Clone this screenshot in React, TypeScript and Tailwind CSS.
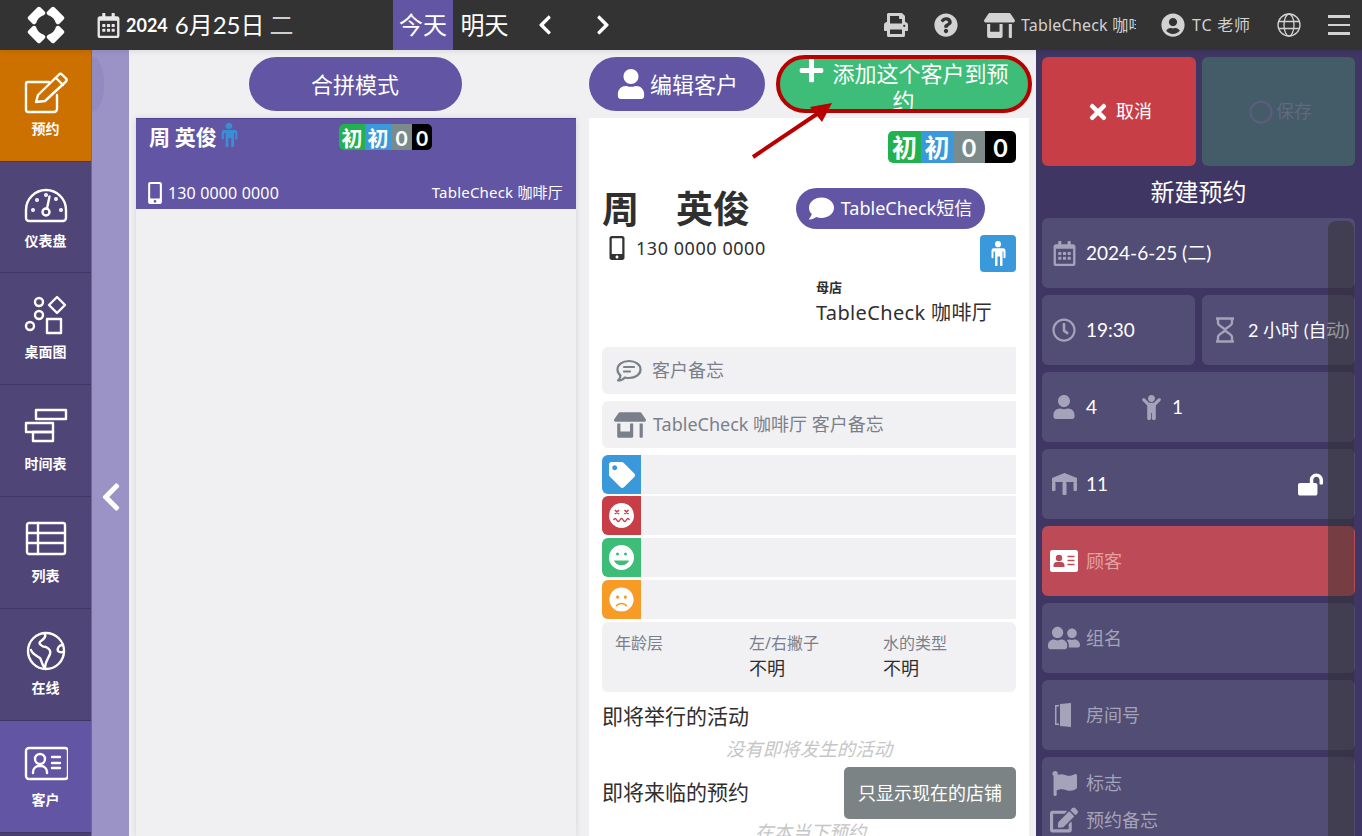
import React from "react";
import {
  FaRegCalendarAlt, FaPrint, FaQuestionCircle, FaStoreAlt, FaUserCircle, FaTimes, FaRegCircle, FaRegClock,
  FaUser, FaChild, FaUserFriends, FaFlag, FaEdit, FaLockOpen, FaTag, FaFrown,
  FaMobileAlt, FaComment, FaPlus, FaChevronLeft, FaChevronRight,
} from "react-icons/fa";

const plex = "font-['Noto_Sans','Noto_Sans_CJK_SC',sans-serif]";
const lato = "font-['Lato','Noto_Sans_CJK_SC',sans-serif]";

const Stroke = ({ children, size = 44 }: { children: React.ReactNode; size?: number }) => (
  <svg width={size} height={size} viewBox="0 0 44 44" fill="none" stroke="white" strokeWidth="2.400" strokeLinecap="round" strokeLinejoin="round">
    {children}
  </svg>
);

const nav = [
  {
    label: "预约", h: "h-[112px]", bg: "bg-[#cc7000]",
    icon: (
      <Stroke>
        <path d="M33 23v14a3 3 0 0 1-3 3H4a2 2 0 0 1-2-2V12a2 2 0 0 1 2-2h21" />
        <path d="M12 30l2-7L35 2.500a2 2 0 0 1 3 0l4 4a2 2 0 0 1 0 3L21 29z" />
        <path d="M32 6l7 7" />
      </Stroke>
    ),
  },
  {
    label: "仪表盘", h: "h-[111px]", bg: "bg-[#4f4577]",
    icon: (
      <Stroke>
        <path d="M5 37a3 3 0 0 1-3-3v-8a20 20 0 0 1 40 0v8a3 3 0 0 1-3 3z" />
        <circle cx="22" cy="28" r="3.500" />
        <path d="M23 24.500l2.500-12" />
        <circle cx="9" cy="26" r=".8" /><circle cx="13" cy="16" r=".8" /><circle cx="22" cy="11" r=".8" /><circle cx="32" cy="15" r=".8" /><circle cx="37" cy="26" r=".8" />
      </Stroke>
    ),
  },
  {
    label: "桌面图", h: "h-[112px]", bg: "bg-[#4f4577]",
    icon: (
      <Stroke>
        <circle cx="15" cy="7" r="4" /><circle cx="15" cy="20" r="4" /><circle cx="6" cy="31" r="4" />
        <path d="M33 2l8 8-8 8-8-8z" />
        <rect x="23" y="24" width="14" height="14" />
      </Stroke>
    ),
  },
  {
    label: "时间表", h: "h-[112px]", bg: "bg-[#4f4577]",
    icon: (
      <Stroke>
        <rect x="12" y="3" width="30" height="9" />
        <rect x="2" y="16" width="27" height="9" />
        <rect x="9" y="25" width="20" height="9" />
      </Stroke>
    ),
  },
  {
    label: "列表", h: "h-[112px]", bg: "bg-[#4f4577]",
    icon: (
      <Stroke>
        <rect x="3" y="4" width="38" height="31" rx="2" />
        <path d="M3 14h38M3 24h38M14 4v31" />
      </Stroke>
    ),
  },
  {
    label: "在线", h: "h-[112px]", bg: "bg-[#4f4577]",
    icon: (
      <Stroke>
        <circle cx="22" cy="20" r="18" />
        <path d="M20 2c3 3 0 6-3 8-4 2 1 6 5 6 4 2 5 4 4 7-2 5-5 8-5 14-3-2-3-7-5-10-3-2-8-4-9-8" />
        <path d="M39 14c-4 0-6 3-5 6 2 2 4 1 6 1" />
      </Stroke>
    ),
  },
  {
    label: "客户", h: "h-[112px]", bg: "bg-[#6155a4]",
    icon: (
      <Stroke>
        <rect x="2" y="5" width="42" height="31" rx="3" />
        <circle cx="16" cy="16" r="5" />
        <path d="M9 30v-1a6 6 0 0 1 6-6h2a6 6 0 0 1 6 6v1" />
        <path d="M28 14h8M28 20h8M28 25h8" />
      </Stroke>
    ),
  },
];

const Logo = () => (
  <svg width="38" height="38" viewBox="0 0 38 38">
    <g fill="white">
      <rect x="1" y="4.500" width="17" height="10" rx="2" transform="rotate(-45 9.500 9.500)" />
      <rect x="20" y="4.500" width="17" height="10" rx="2" transform="rotate(45 28.500 9.500)" />
      <rect x="1" y="23.500" width="17" height="10" rx="2" transform="rotate(45 9.500 28.500)" />
      <rect x="20" y="23.500" width="17" height="10" rx="2" transform="rotate(-45 28.500 28.500)" />
    </g>
    <circle cx="19" cy="19" r="10" fill="#333333" />
  </svg>
);

const MaleIcon = ({ w = 16, h = 24, color = "currentColor" }: { w?: number; h?: number; color?: string }) => (
  <svg width={w} height={h} viewBox="0 0 16 24" fill={color} preserveAspectRatio="none">
    <circle cx="8" cy="3" r="3" />
    <path d="M3 7h10a2.500 2.500 0 0 1 2.500 2.500v6a1 1 0 0 1-2 0V10h-1v13a1 1 0 0 1-2.500 0v-8H8.500h-1v8a1 1 0 0 1-2.500 0V10H3.500v5.500a1 1 0 0 1-2 0v-6A2.500 2.500 0 0 1 3 7z" />
  </svg>
);

const TableIcon = () => (
  <svg width="25" height="22" viewBox="0 0 25 22" fill="#a5a3b9">
    <path d="M12.500 0L25 5v4H0V5z" />
    <rect x="0" y="9" width="3.500" height="9" rx="1" />
    <rect x="10.500" y="9" width="4" height="13" rx="1" />
    <rect x="21.500" y="9" width="3.500" height="9" rx="1" />
  </svg>
);

const Hourglass = () => (
  <svg width="20" height="26" viewBox="0 0 20 26" fill="none" stroke="#a5a3b9" strokeWidth="2.400">
    <path d="M1 1.500h18M1 24.500h18M3 2v4c0 3 7 5 7 7s-7 4-7 7v4M17 2v4c0 3-7 5-7 7s7 4 7 7v4" />
  </svg>
);

const Door = () => (
  <svg width="18" height="24" viewBox="0 0 18 24" fill="#a5a3b9">
    <path d="M5 1l11-1v24l-11-1z" /><path d="M0 2h4v1.500H1.500v17H4V22H0z" />
  </svg>
);

const NoteLines = () => (
  <svg width="26" height="24" viewBox="0 0 26 24" fill="none" stroke="#7b7f89" strokeWidth="2.200" strokeLinecap="round" strokeLinejoin="round">
    <path d="M13 2c6.500 0 11.500 3.500 11.500 8.500S19.500 19 13 19c-1.500 0-3-.2-4-.6C7.500 20 5 21.500 2 21.500c1.500-1.500 2.500-3.500 2.500-5C2.500 15 1.500 13 1.500 10.500 1.500 5.500 6.500 2 13 2z" />
    <path d="M8 8h10M8 12.500h6" />
  </svg>
);

const IdCard = () => (
  <svg width="28" height="22" viewBox="0 0 28 22">
    <rect width="28" height="22" rx="2.500" fill="white" />
    <circle cx="9" cy="8" r="3.200" fill="#bc4b57" />
    <path d="M3.500 17v-1.500A3.500 3.500 0 0 1 7 12h4a3.500 3.500 0 0 1 3.500 3.500V17z" fill="#bc4b57" />
    <path d="M17.500 6.500h7M17.500 10.500h7M17.500 14.500h7" stroke="#bc4b57" strokeWidth="1.600" />
  </svg>
);

const DizzyFace = () => (
  <svg width="25" height="25" viewBox="0 0 25 25">
    <circle cx="12.500" cy="12.500" r="12.500" fill="white" />
    <path d="M6 7l4 4M10 7l-4 4M15.500 7l4 4M19.500 7l-4 4" stroke="#c73e46" strokeWidth="1.600" />
    <path d="M4.500 17c1.500-2 2-2 3.200 0s2 2 3.200 0 2-2 3.200 0 2 2 3.200 0 2-2 3.200 0" fill="none" stroke="#c73e46" strokeWidth="1.400" />
  </svg>
);

const SmileFace = () => (
  <svg width="25" height="25" viewBox="0 0 25 25">
    <circle cx="12.500" cy="12.500" r="12.500" fill="white" />
    <circle cx="8.500" cy="9" r="1.500" fill="#3dbd78" /><circle cx="16.500" cy="9" r="1.500" fill="#3dbd78" />
    <path d="M5 15.500h15c-1 3-4 4.800-7.500 4.800S6 18.500 5 15.500z" fill="#3dbd78" />
  </svg>
);

const Badges = ({ big }: { big?: boolean }) => {
  const items: [string, string, string][] = big
    ? [["初", "bg-[#22b14f]", "w-[33px]"], ["初", "bg-[#3a99da]", "w-[32px]"], ["0", "bg-[#7b8a8b]", "w-[32px]"], ["0", "bg-black", "w-[31px]"]]
    : [["初", "bg-[#22b14f]", "w-[26px]"], ["初", "bg-[#3a99da]", "w-[26px]"], ["0", "bg-[#7b8a8b]", "w-[21px]"], ["0", "bg-black", "w-[20px]"]];
  return (
    <div className={`flex rounded-[5px] overflow-hidden ${big ? "h-[32px] text-[25px]" : "h-[26px] text-[21px]"}`}>
      {items.map(([t, c, w], i) => (
        <div key={i} className={`${w} ${c} flex items-center justify-center font-bold text-white leading-none ${lato}`}>{t}</div>
      ))}
    </div>
  );
};

const PurplePill = ({ children, className }: { children: React.ReactNode; className: string }) => (
  <div className={`bg-[#6155a4] text-white rounded-[27px] flex items-center justify-center ${className}`}>{children}</div>
);

const TagRow = ({ bg, icon }: { bg: string; icon: React.ReactNode }) => (
  <div className="h-[39px] bg-[#f1f1f4] rounded-l-[6px] flex">
    <div className={`w-[39px] ${bg} rounded-l-[6px] flex items-center justify-center text-white`}>{icon}</div>
  </div>
);

const Field = ({ children, className = "" }: { children: React.ReactNode; className?: string }) => (
  <div className={`h-[70px] bg-[#524d74] rounded-[6px] flex items-center ${className}`}>{children}</div>
);

const IconBox = ({ children }: { children: React.ReactNode }) => (
  <div className="w-[44px] flex items-center justify-center shrink-0 text-[#a5a3b9]">{children}</div>
);

export default function App() {
  return (
    <div className={`w-[1362px] h-[836px] overflow-hidden flex flex-col bg-[#f0f0f3] relative ${plex}`}>
      {/* top bar */}
      <header className="h-[50px] shrink-0 bg-[#333333] flex items-stretch text-white relative z-10 shadow-[0_2px_5px_rgba(0,0,0,0.08)]">
        <div className="w-[91px] flex items-center justify-center"><Logo /></div>
        <div className={`w-[302px] pl-[5px] flex items-center ${lato}`}>
          <FaRegCalendarAlt className="text-[25px] text-[#e8e8e8]" />
          <span className="ml-[5px] text-[18px] font-bold">2024</span>
          <span className="ml-[7px] text-[24px]">6月25日</span>
          <span className="ml-[5px] text-[24px] text-[#cfcfcf]">二</span>
        </div>
        <div className="w-[60px] bg-[#6155a4] flex items-center justify-center text-[24px]">今天</div>
        <div className="w-[63px] flex items-center justify-center text-[24px]">明天</div>
        <div className="w-[50px] flex items-center justify-center pl-[8px]"><FaChevronLeft className="text-[22px]" /></div>
        <div className="w-[60px] flex items-center justify-center pl-[14px]"><FaChevronRight className="text-[22px]" /></div>
        <div className="flex-1 flex items-center text-[#d2d2d2] text-[16px] pl-[258px]">
          <FaPrint className="text-[24px] shrink-0" />
          <FaQuestionCircle className="text-[24px] ml-[26px] shrink-0" />
          <FaStoreAlt className="text-[31px] ml-[26px] shrink-0" />
          <span className="ml-[6px] w-[115px] overflow-hidden whitespace-nowrap tracking-[0.2px]">TableCheck 咖啡厅</span>
          <FaUserCircle className="text-[24px] ml-[25px] shrink-0" />
          <span className="ml-[7px] w-[60px] whitespace-nowrap tracking-[0.8px]">TC 老师</span>
          <svg className="ml-[25px] shrink-0" width="24" height="24" viewBox="0 0 24 24" fill="none" stroke="#d2d2d2" strokeWidth="1.300">
            <circle cx="12" cy="12" r="11" /><ellipse cx="12" cy="12" rx="5" ry="11" /><path d="M1.500 8.500h21M1.500 15.500h21" />
          </svg>
          <div className="ml-[27px] w-[22px] flex flex-col gap-[6px] shrink-0">
            <div className="h-[2.500px] bg-[#d2d2d2]" /><div className="h-[2.500px] bg-[#d2d2d2]" /><div className="h-[2.500px] bg-[#d2d2d2]" />
          </div>
        </div>
      </header>

      <div className="flex-1 flex min-h-0">
        {/* sidebar */}
        <nav className="w-[92px] shrink-0 bg-[#4a406f] border-r border-[#6f6799] flex flex-col">
          {nav.map((n) => (
            <div key={n.label} className={`${n.h} ${n.bg} shrink-0 border-b border-[#3f3663] flex flex-col items-center pt-[22px] text-white ${lato}`}>
              <div className="h-[44px]">{n.icon}</div>
              <div className="mt-[4px] text-[14px] font-bold leading-[18px]">{n.label}</div>
            </div>
          ))}
        </nav>

        {/* collapse strip */}
        <div className="w-[37px] shrink-0 bg-[#9b93c6] flex items-center justify-center relative pt-[108px]">
          <div className="absolute left-0 top-[6px] w-[12px] h-[56px] rounded-r-[12px_28px] bg-[#938bbf]" />
          <FaChevronLeft className="text-[32px] text-white" />
        </div>

        {/* customer list */}
        <div className="w-[460px] shrink-0 pl-[7px] pt-[7px] flex flex-col">
          <div className="w-[440px] flex justify-center pr-[2px]">
            <PurplePill className="w-[213px] h-[54px] text-[22px]">合拼模式</PurplePill>
          </div>
          <div className="w-[440px] flex-1 mt-[7px] shadow-[0_0_6px_rgba(0,0,0,0.12)]">
            <div className="h-[91px] bg-[#6155a4] border-t border-[#4f4590] text-white flex flex-col">
              <div className="h-[56px] flex items-start pt-[3px] pl-[13px] relative">
                <span className="text-[21px] font-bold leading-[28px] font-['Noto_Sans_CJK_SC',sans-serif]">周 英俊</span>
                <div className="ml-[3px] mt-[1px]"><MaleIcon w={18} h={24} color="#3a8fd4" /></div>
                <div className="absolute left-[203px] top-[5px]"><Badges /></div>
              </div>
              <div className="flex-1 flex items-center justify-between pl-[8px] pr-[13px] text-[15px] pt-[1px]">
                <span className="flex items-center gap-[2px] text-[16px] tracking-[0.15px]"><FaMobileAlt className="text-[22px]" />130 0000 0000</span>
                <span className="tracking-[0.2px]">TableCheck 咖啡厅</span>
              </div>
            </div>
          </div>
        </div>

        {/* customer detail */}
        <div className="w-[447px] shrink-0 pt-[7px] flex flex-col">
          <div className="flex w-[441px] gap-[12px]">
            <PurplePill className="w-[176px] h-[54px] text-[22px] gap-[4px]">
              <FaUser className="text-[30px]" /><span>编辑客户</span>
            </PurplePill>
            <div className="w-[253px] h-[54px] bg-[#3dbd78] rounded-[27px] text-white text-[22px] leading-[27px] text-center px-[16px]">
              <FaPlus className="inline text-[27px] mr-[7px] align-[-2px]" />添加这个客户到预约
            </div>
          </div>
          <div className="w-[440px] flex-1 mt-[7px] bg-white px-[13px] pt-[13px] min-h-0 overflow-hidden text-[#2f2f2f]">
            <div className="flex justify-end"><Badges big /></div>
            <div className="flex h-[41px] mt-[25px] items-center">
              <span className="text-[37px] font-bold leading-[41px] whitespace-pre font-['Noto_Sans_CJK_SC',sans-serif] w-[194px] pb-[3px]">周{"\u3000"}英俊</span>
              <PurplePill className="w-[189px] h-[41px] text-[18px] gap-[7px] !rounded-[21px]">
                <FaComment className="text-[25px]" /><span>TableCheck短信</span>
              </PurplePill>
            </div>
            <div className="flex items-start justify-between h-[37px] mt-[6px]">
              <span className="flex items-center pl-[5px] text-[18px] leading-[26px]">
                <FaMobileAlt className="text-[24px] text-[#333] w-[20px]" /><span className="ml-[9px] tracking-[0.55px]">130 0000 0000</span>
              </span>
              <div className="w-[36px] h-[37px] bg-[#3a99da] rounded-[4px] flex items-center justify-center text-white"><MaleIcon w={16} h={25} /></div>
            </div>
            <div className="pl-[214px] h-[75px] pt-[7px]">
              <div className="text-[13px] font-bold leading-[16px] font-['Noto_Sans_CJK_SC',sans-serif]">母店</div>
              <div className="text-[20px] leading-[34px] mt-[1px] whitespace-nowrap tracking-[0.35px]">TableCheck 咖啡厅</div>
            </div>
            <div className="h-[47px] bg-[#f1f1f4] rounded-l-[6px] flex items-center pl-[14px] text-[#7b7f89] text-[18px]">
              <NoteLines /><span className="ml-[10px]">客户备忘</span>
            </div>
            <div className="h-[47px] mt-[7px] bg-[#f1f1f4] rounded-l-[6px] flex items-center pl-[12px] text-[#7b7f89] text-[18px]">
              <FaStoreAlt className="text-[32px]" /><span className="ml-[7px] whitespace-nowrap">TableCheck 咖啡厅 客户备忘</span>
            </div>
            <div className="mt-[7px] flex flex-col">
              <TagRow bg="bg-[#3a99da]" icon={<FaTag className="text-[26px]" />} />
              <div className="mt-[2px]"><TagRow bg="bg-[#c73e46]" icon={<DizzyFace />} /></div>
              <div className="mt-[3px]"><TagRow bg="bg-[#3dbd78]" icon={<SmileFace />} /></div>
              <div className="mt-[3px]"><TagRow bg="bg-[#f69b25]" icon={<FaFrown className="text-[25px]" />} /></div>
            </div>
            <div className="mt-[3px] h-[70px] bg-[#f1f1f4] rounded-[6px] flex pl-[13px] pt-[9px] text-[16px] leading-[24px]">
              <div className="w-[134px] text-[#7b7f89]">年龄层</div>
              <div className="w-[134px]"><div className="text-[#7b7f89]">左/右撇子</div><div className="text-[18px] leading-[27px] text-[#2f2f2f]">不明</div></div>
              <div><div className="text-[#7b7f89]">水的类型</div><div className="text-[18px] leading-[27px] text-[#2f2f2f]">不明</div></div>
            </div>
            <div className="mt-[9px] text-[21px] leading-[30px]">即将举行的活动</div>
            <div className="text-center italic text-[#c6c6c6] text-[18.500px] leading-[30px] mt-[3px]">没有即将发生的活动</div>
            <div className="flex items-center justify-between mt-[3px]">
              <span className="text-[21px]">即将来临的预约</span>
              <div className="w-[172px] h-[52px] bg-[#7b8384] rounded-[5px] flex items-center justify-center text-white text-[18px]">只显示现在的店铺</div>
            </div>
            <div className="text-center italic text-[#c6c6c6] text-[18.500px] leading-[30px] mt-[-2px] pl-[3px]">在本当下预约</div>
          </div>
        </div>

        {/* reservation panel */}
        <aside className={`flex-1 bg-[#403663] pl-[6px] pr-[7px] pt-[7px] flex flex-col gap-[7px] min-h-0 overflow-hidden ${lato} text-white`}>
          <div className="flex gap-[6px] shrink-0">
            <div className="w-[154px] h-[109px] bg-[#c73e46] rounded-[6px] flex items-center justify-center text-[18px] gap-[6px]">
              <FaTimes className="text-[24px]" />取消
            </div>
            <div className="flex-1 h-[109px] bg-[#445b68] rounded-[6px] flex items-center justify-center text-[18px] gap-[3px] text-[#62697c] pl-[4px]">
              <FaRegCircle className="text-[24px] text-[#5f5b7d]" />保存
            </div>
          </div>
          <div className="h-[52px] shrink-0 -my-[7px] flex items-center justify-center text-[24px]">新建预约</div>
          <Field className="shrink-0 text-[19px]">
            <IconBox><FaRegCalendarAlt className="text-[25px]" /></IconBox>
            <span>2024-6-25 (二)</span>
          </Field>
          <div className="flex gap-[7px] shrink-0">
            <Field className="w-[153px] text-[19px]">
              <IconBox><FaRegClock className="text-[24px]" /></IconBox>
              <span>19:30</span>
            </Field>
            <Field className="flex-1 text-[18px] whitespace-nowrap">
              <div className="w-[46px] flex justify-center shrink-0"><Hourglass /></div>
              <span>2 小时 (自动)</span>
            </Field>
          </div>
          <Field className="shrink-0 text-[19px]">
            <IconBox><FaUser className="text-[24px]" /></IconBox>
            <span className="w-[43px]">4</span>
            <div className="w-[44px] flex justify-center text-[#a5a3b9]"><FaChild className="text-[25px]" /></div>
            <span className="ml-[-1px]">1</span>
          </Field>
          <Field className="shrink-0 text-[19px] justify-between pr-[32px]">
            <div className="flex items-center"><IconBox><TableIcon /></IconBox><span>11</span></div>
            <FaLockOpen className="text-[25px] text-white" />
          </Field>
          <Field className="shrink-0 text-[18px] !bg-[#bc4b57] text-[#e5a0a2]">
            <IconBox><IdCard /></IconBox><span>顾客</span>
          </Field>
          <Field className="shrink-0 text-[18px] text-[#a5a3b9]">
            <IconBox><FaUserFriends className="text-[32px]" /></IconBox><span>组名</span>
          </Field>
          <Field className="shrink-0 text-[18px] text-[#a5a3b9]">
            <IconBox><Door /></IconBox><span>房间号</span>
          </Field>
          <div className="h-[90px] shrink-0 bg-[#524d74] rounded-t-[6px] text-[18px] text-[#a5a3b9] pt-[13px] flex flex-col gap-[11px]">
            <div className="flex items-center h-[26px]"><IconBox><FaFlag className="text-[25px]" /></IconBox><span>标志</span></div>
            <div className="flex items-center h-[26px]"><IconBox><FaEdit className="text-[28px]" /></IconBox><span>预约备忘</span></div>
          </div>
        </aside>
      </div>

      {/* overlays: scrollbar thumb, annotation */}
      <div className="absolute left-[1328px] top-[221px] w-[26px] h-[620px] rounded-t-[8px] bg-[rgba(48,48,48,0.5)]" />
      <div className="absolute left-[776px] top-[55px] w-[256px] h-[58px] rounded-[29px] border-[4px] border-[#b80000] z-20" />
      <svg className="absolute left-[745px] top-[95px] z-20" width="100" height="70" viewBox="0 0 100 70" fill="none">
        <path d="M8 62L72 19" stroke="#b80000" strokeWidth="4" />
        <path d="M87 8L65 12L77 27z" fill="#b80000" />
      </svg>
    </div>
  );
}
